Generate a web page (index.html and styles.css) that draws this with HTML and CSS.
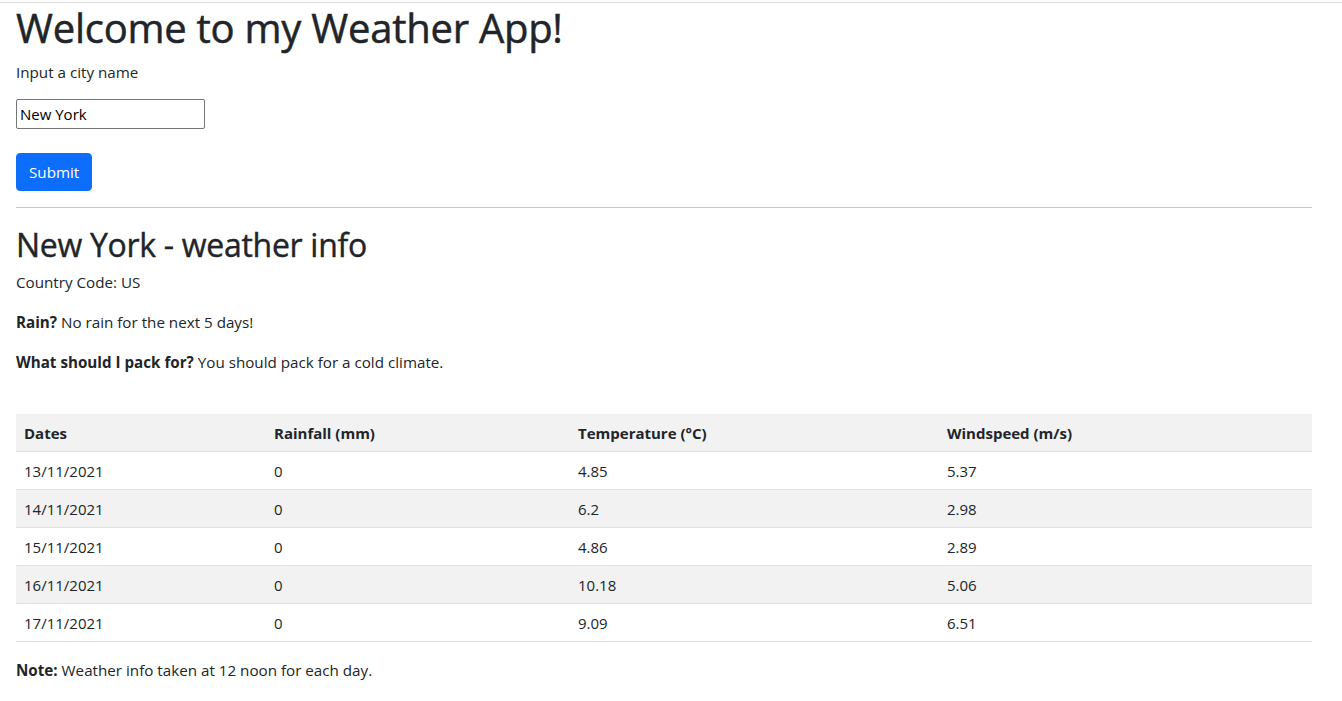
FILE: index.html
```html
<!DOCTYPE html>
<html lang="en">
<head>
<meta charset="utf-8">
<title>Weather App</title>
<link rel="stylesheet" href="styles.css">
</head>
<body>
<div class="topline"></div>
<main class="page">
  <h1 class="title">Welcome to my Weather App!</h1>
  <form class="city-form">
    <p class="label">Input a city name</p>
    <input class="city-input" type="text" value="New York">
    <button class="btn-submit" type="button">Submit</button>
  </form>
  <hr class="divider">
  <h2 class="subtitle">New York - weather info</h2>
  <p class="info">Country Code: US</p>
  <p class="info"><b>Rain?</b> No rain for the next 5 days!</p>
  <p class="info pack"><b>What should I pack for?</b> You should pack for a cold climate.</p>
  <table class="weather">
    <colgroup>
      <col class="c1"><col class="c2"><col class="c3"><col class="c4">
    </colgroup>
    <tbody>
      <tr class="head"><th>Dates</th><th>Rainfall (mm)</th><th>Temperature (°C)</th><th>Windspeed (m/s)</th></tr>
      <tr><td>13/11/2021</td><td>0</td><td>4.85</td><td>5.37</td></tr>
      <tr class="stripe"><td>14/11/2021</td><td>0</td><td>6.2</td><td>2.98</td></tr>
      <tr><td>15/11/2021</td><td>0</td><td>4.86</td><td>2.89</td></tr>
      <tr class="stripe"><td>16/11/2021</td><td>0</td><td>10.18</td><td>5.06</td></tr>
      <tr><td>17/11/2021</td><td>0</td><td>9.09</td><td>6.51</td></tr>
    </tbody>
  </table>
  <p class="info"><b>Note:</b> Weather info taken at 12 noon for each day.</p>
</main>
</body>
</html>
```
FILE: styles.css
```css
html, body {
  margin: 0;
  padding: 0;
  background: #fff;
}
body {
  font-family: "Open Sans", "Noto Sans", sans-serif;
  font-size: 15.2px;
  line-height: 24px;
  color: #212529;
}
.topline {
  margin-top: 2px;
  border-top: 1px solid #dcdcdc;
}
.page {
  width: 1296px;
  padding-left: 16px;
  padding-top: 1px;
}
.title {
  margin: 0 0 8px 0;
  font-size: 40px;
  line-height: 48px;
  font-weight: 400;
  letter-spacing: -0.25px;
  -webkit-text-stroke: 0.5px #212529;
}
.city-form {
  margin: 0;
}
.label {
  margin: 0 0 15px 0;
}
.city-input {
  display: block;
  box-sizing: border-box;
  width: 189px;
  height: 30px;
  margin: 0 0 24px 0;
  padding: 0 3px;
  border: 1px solid #767676;
  border-radius: 2px;
  font-family: inherit;
  font-size: 15px;
  color: #000;
}
.btn-submit {
  display: block;
  box-sizing: border-box;
  width: 76px;
  height: 38px;
  padding: 0 12px;
  border: 1px solid #0d6efd;
  border-radius: 4px;
  background: #0d6efd;
  color: #fff;
  font-family: inherit;
  font-size: 15.2px;
}
.divider {
  margin: 16px 0;
  border: 0;
  border-top: 1px solid #c8c8c8;
  height: 0;
}
.subtitle {
  margin: 0 0 6px 0;
  padding-top: 2px;
  font-size: 32px;
  line-height: 38px;
  font-weight: 400;
  letter-spacing: -0.3px;
  -webkit-text-stroke: 0.4px #212529;
}
.info {
  margin: 0 0 16px 0;
}
.pack {
  margin-bottom: 40px;
}
.weather {
  width: 100%;
  border-collapse: collapse;
  margin-bottom: 16px;
}
.c1 { width: 250px; }
.c2 { width: 304px; }
.c3 { width: 369px; }
.c4 { width: 373px; }
.weather th,
.weather td {
  text-align: left;
  padding: 8px 8px 6px 8px;
  line-height: 23px;
  border-bottom: 1px solid #dee2e6;
  font-size: 15px;
}
.weather th {
  font-weight: 700;
}
.weather .head,
.weather .stripe {
  background: #f2f2f2;
}
```
